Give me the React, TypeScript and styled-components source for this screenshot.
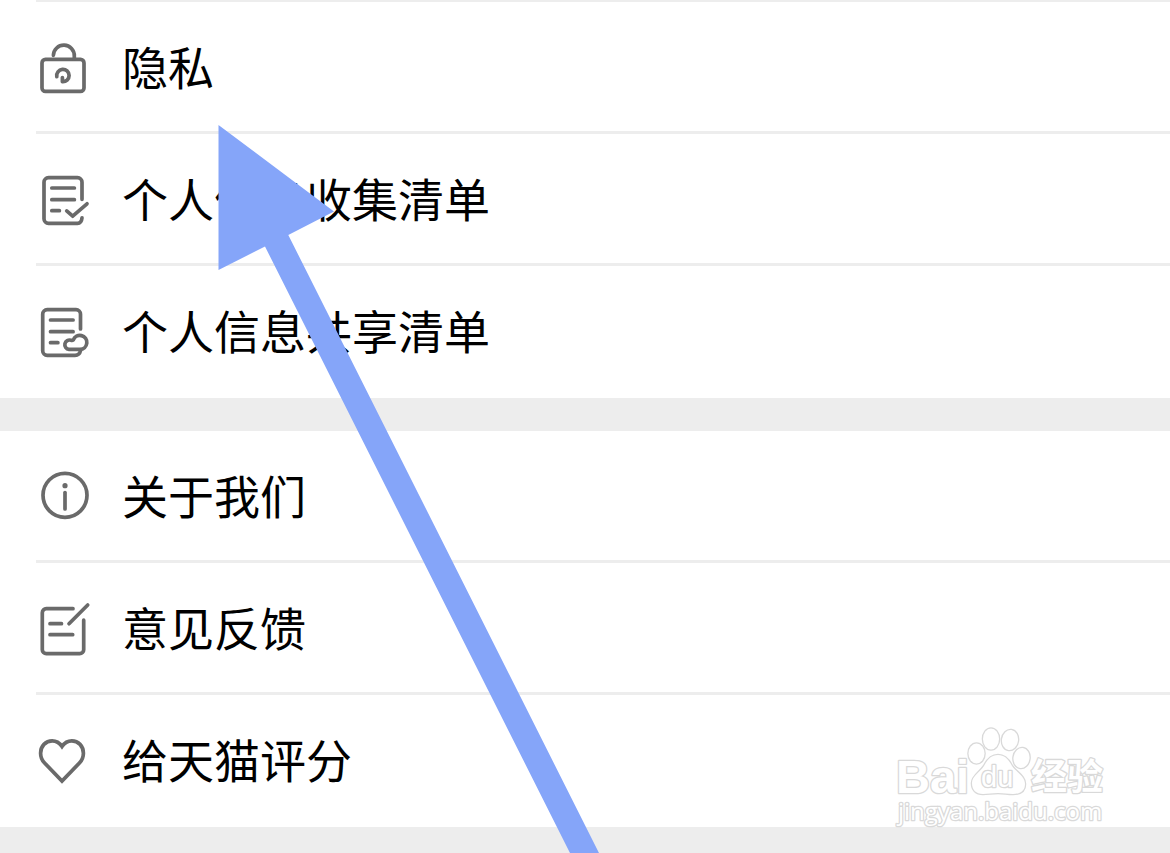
import React from 'react';
import styled, { createGlobalStyle } from 'styled-components';

const GlobalStyle = createGlobalStyle`
  * { box-sizing: border-box; }
  body {
    margin: 0;
    background: #ededed;
    font-family: "Noto Sans CJK SC", sans-serif;
  }
`;

const Page = styled.main`
  position: relative;
  display: flex;
  flex-direction: column;
  gap: 33px;
  min-height: 100vh;
  overflow: hidden;
  background: #ededed;
`;

const Group = styled.ul<{ $continued?: boolean }>`
  margin: 0;
  padding: 0 0 0 36px;
  list-style: none;
  background: #ffffff;

  &::before {
    content: "";
    display: ${(p) => (p.$continued ? 'block' : 'none')};
    height: 2px;
    background: #ededed;
  }
`;

const Item = styled.li`
  height: 132px;
  border-bottom: 3px solid #ededed;

  &:last-child {
    border-bottom-color: transparent;
  }
`;

const RowButton = styled.button`
  display: flex;
  align-items: center;
  gap: 29px;
  width: 100%;
  height: 100%;
  padding: 0;
  border: 0;
  background: none;
  color: #000000;
  font-family: inherit;
  font-size: 46px;
  line-height: 68px;
  text-align: left;
  cursor: pointer;
`;

const Label = styled.span`
  padding-bottom: 4px;
`;

const Glyph = styled.svg`
  flex: none;
  width: 57px;
  height: 57px;
  fill: none;
  stroke: #6a6a6a;
  stroke-width: 3.7;
  stroke-linecap: round;
  stroke-linejoin: round;
`;

const Pointer = styled.svg`
  position: absolute;
  top: 125px;
  left: 218px;
  width: 382px;
  height: 730px;
  fill: #85a5f9;
  pointer-events: none;
`;

const Watermark = styled.svg`
  position: absolute;
  top: 720px;
  right: 58px;
  width: 220px;
  height: 112px;
  pointer-events: none;
  fill: #ffffff;
  stroke: #d9d9d9;
  stroke-width: 2.6;
  stroke-linejoin: round;
  paint-order: stroke;
`;

const LockIcon = () => (
  <Glyph viewBox="0 0 57 57" aria-hidden="true">
    <rect x="6" y="21.4" width="42" height="32" rx="3.5" />
    <path d="M17.4 17.3a10.4 10.4 0 0 1 20.9 0.7v3" />
    <path d="M20.8 38.6A6.2 6.2 0 1 1 26.4 43.7V39.6" />
  </Glyph>
);

const ChecklistIcon = () => (
  <Glyph viewBox="0 0 57 57" aria-hidden="true">
    <path d="M46 29.3V12.2a4.5 4.5 0 0 0-4.5-4.5h-29A4.5 4.5 0 0 0 8 12.2v36.6a4.5 4.5 0 0 0 4.5 4.5h29q4 0 4.5-5.4" />
    <path d="M15.8 18h22.6M15.8 29.7h22.6M15.8 40.7h7.6M30.7 40.9l6 5.3L51 33.8" />
  </Glyph>
);

const ShareListIcon = () => (
  <Glyph viewBox="0 0 57 57" aria-hidden="true">
    <path d="M44.5 27V12.2A4.5 4.5 0 0 0 40 7.7H11.2a4.5 4.5 0 0 0-4.5 4.5v36.6a4.5 4.5 0 0 0 4.5 4.5H39q4.5 0 5.5-4.7" />
    <path d="M14.5 18h22.6M14.5 29.7h22.6M14.5 40.7h7.4" />
    <path d="M33 47.4H44a7 7 0 1 0-6.7-9.5q-1 .9-2.2.4A4.7 4.7 0 1 0 33 47.4Z" />
  </Glyph>
);

const InfoIcon = () => (
  <Glyph viewBox="0 0 57 57" aria-hidden="true">
    <circle cx="29" cy="28.3" r="22" />
    <circle cx="29" cy="18.7" r="2.6" fill="#6a6a6a" stroke="none" />
    <path d="M29 25.5V42" />
  </Glyph>
);

const FeedbackIcon = () => (
  <Glyph viewBox="0 0 57 57" aria-hidden="true">
    <path d="M37 9.7H10.3a4 4 0 0 0-4 4v37a4 4 0 0 0 4 4h33.4a4 4 0 0 0 4-4V21.2" />
    <path d="M14 24.7h11.5M14 35.7h22.7M33 24.7L51.7 6" />
  </Glyph>
);

const HeartIcon = () => (
  <Glyph viewBox="0 0 57 57" aria-hidden="true">
    <path
      strokeLinejoin="miter"
      d="M26 15.4C23.4 11.6 20 9.8 16.2 9.8C9.6 9.8 4.6 15.2 4.6 22.2C4.6 26.2 6 29.4 8.8 32.2L26 50L43.2 32.2C46 29.4 47.4 26.2 47.4 22.2C47.4 15.2 42.4 9.8 35.8 9.8C32 9.8 28.6 11.6 26 15.4Z"
    />
  </Glyph>
);

type Entry = { label: string; Icon: () => React.JSX.Element };

const privacyEntries: Entry[] = [
  { label: '隐私', Icon: LockIcon },
  { label: '个人信息收集清单', Icon: ChecklistIcon },
  { label: '个人信息共享清单', Icon: ShareListIcon },
];

const aboutEntries: Entry[] = [
  { label: '关于我们', Icon: InfoIcon },
  { label: '意见反馈', Icon: FeedbackIcon },
  { label: '给天猫评分', Icon: HeartIcon },
];

const SettingsGroup = ({ entries, continued }: { entries: Entry[]; continued?: boolean }) => (
  <Group $continued={continued}>
    {entries.map(({ label, Icon }) => (
      <Item key={label}>
        <RowButton type="button">
          <Icon />
          <Label>{label}</Label>
        </RowButton>
      </Item>
    ))}
  </Group>
);

const BaiduWatermark = () => (
  <Watermark viewBox="0 0 220 112" role="img" aria-label="Baidu 经验">
    <text x="4" y="73" fontFamily="Liberation Sans, sans-serif" fontWeight="700" fontSize="47">Bai</text>
    <g>
      <ellipse cx="84.5" cy="33.5" rx="8" ry="10" />
      <ellipse cx="99" cy="19" rx="8" ry="10.5" />
      <ellipse cx="118" cy="20" rx="8" ry="10" transform="rotate(8 118 20)" />
      <ellipse cx="129.5" cy="38" rx="8" ry="10" transform="rotate(8 129.5 38)" />
      <path d="M106 35C113 35 117 40 120 46C124 52 133 56 133 64C133 71 128 74 121 74C115 74 112 73 106 73C100 73 96 74 91 74C84 74 80 70 80 63C80 56 88 52 92 46C95 40 99 35 106 35Z" />
    </g>
    <text x="89" y="67" fontFamily="Liberation Sans, sans-serif" fontSize="29">du</text>
    <text x="139" y="70" fontFamily="Noto Sans CJK SC, sans-serif" fontWeight="700" fontSize="36">经验</text>
    <text x="6" y="100" fontFamily="Open Sans, sans-serif" fontSize="24">jingyan.baidu.com</text>
  </Watermark>
);

export default function App() {
  return (
    <>
      <GlobalStyle />
      <Page>
        <SettingsGroup entries={privacyEntries} continued />
        <SettingsGroup entries={aboutEntries} />
        <Pointer viewBox="0 0 382 730" aria-hidden="true">
          <path d="M0.5 0L116 86.5L70.3 110L382 730H353L47 121.5L0.5 145Z" />
        </Pointer>
        <BaiduWatermark />
      </Page>
    </>
  );
}
